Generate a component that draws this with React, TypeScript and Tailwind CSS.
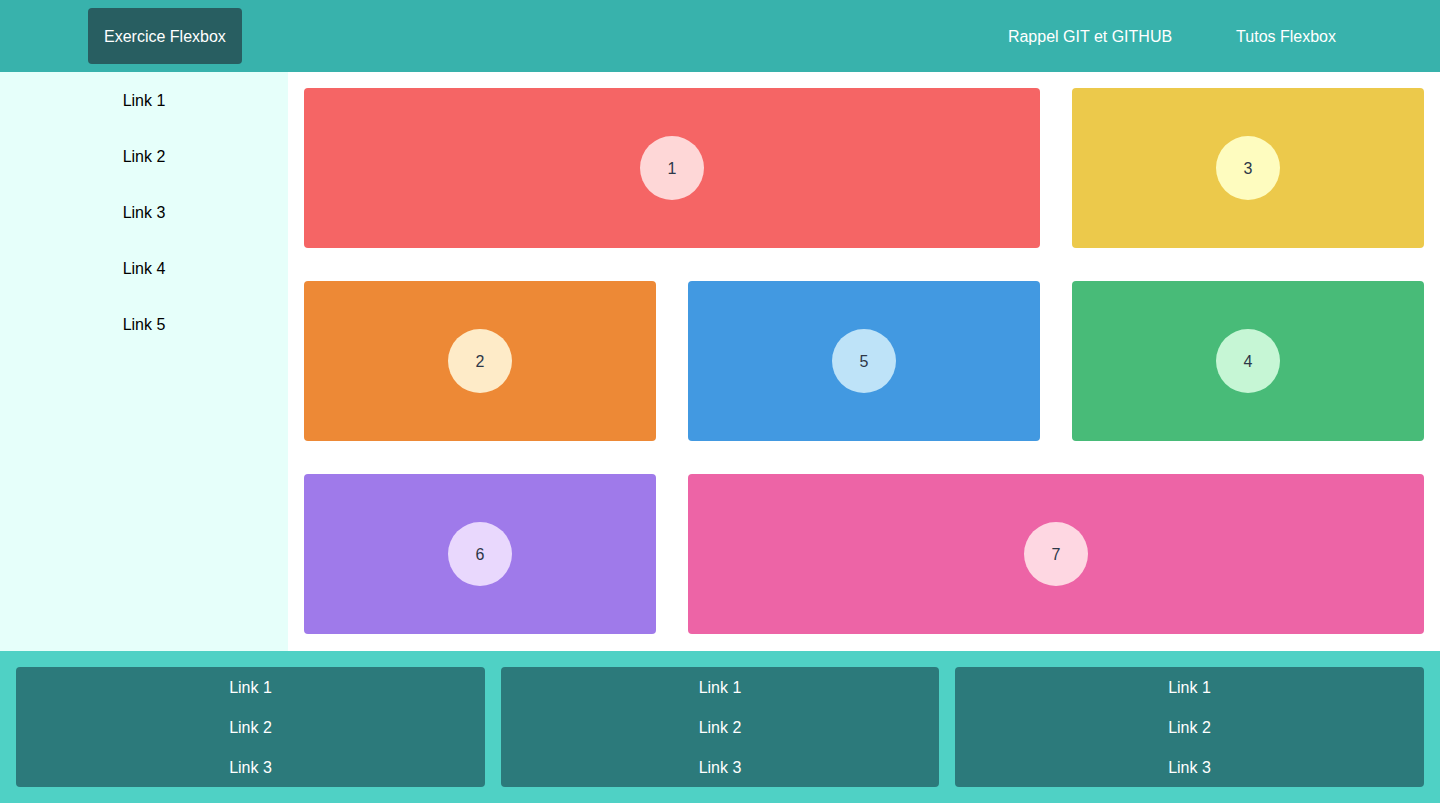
import React from 'react';

interface Box {
  id: number;
  bg: string;
  dot: string;
  span: string;
}

const boxes: Box[] = [
  { id: 1, bg: 'bg-[#f56565]', dot: 'bg-[#fed7d7]', span: 'col-span-2' },
  { id: 3, bg: 'bg-[#ecc94b]', dot: 'bg-[#fefcbf]', span: 'col-span-1' },
  { id: 2, bg: 'bg-[#ed8936]', dot: 'bg-[#feebc8]', span: 'col-span-1' },
  { id: 5, bg: 'bg-[#4299e1]', dot: 'bg-[#bee3f8]', span: 'col-span-1' },
  { id: 4, bg: 'bg-[#48bb78]', dot: 'bg-[#c6f6d5]', span: 'col-span-1' },
  { id: 6, bg: 'bg-[#9f7aea]', dot: 'bg-[#e9d8fd]', span: 'col-span-1' },
  { id: 7, bg: 'bg-[#ed64a6]', dot: 'bg-[#fed7e2]', span: 'col-span-2' },
];

const footerCols = ['w-[469px]', 'w-[438px]', 'w-[469px]'];

export default function App() {
  return (
    <div className="min-h-screen flex flex-col font-['Liberation_Sans',Arial,sans-serif] text-base">
      <header className="h-[72px] bg-[#38b2ac] flex items-center justify-between px-[88px]">
        <a className="bg-[#285e61] text-white px-4 pt-[17px] pb-[15px] rounded leading-6">Exercice Flexbox</a>
        <nav className="flex gap-8">
          <a className="text-white px-4 pt-[17px] pb-[15px] leading-6">Rappel GIT et GITHUB</a>
          <a className="text-white px-4 pt-[17px] pb-[15px] leading-6">Tutos Flexbox</a>
        </nav>
      </header>

      <div className="flex">
        <aside className="w-[288px] bg-[#e6fffa] flex flex-col items-center">
          {[1, 2, 3, 4, 5].map((n) => (
            <a key={n} className="pt-[17px] pb-[15px] leading-6 text-black">
              Link {n}
            </a>
          ))}
        </aside>

        <main className="flex-1 px-4 pt-4 pb-[17px] grid grid-cols-3 gap-x-8 gap-y-[33px]">
          {boxes.map((box) => (
            <div
              key={box.id}
              className={`${box.span} ${box.bg} h-40 rounded flex items-center justify-center`}
            >
              <div
                className={`${box.dot} w-16 h-16 pt-px rounded-full flex items-center justify-center text-[#2d3748]`}
              >
                {box.id}
              </div>
            </div>
          ))}
        </main>
      </div>

      <footer className="bg-[#4fd1c5] p-4 flex gap-4">
        {footerCols.map((w, i) => (
          <div key={i} className={`${w} bg-[#2c7a7b] rounded flex flex-col items-center`}>
            {[1, 2, 3].map((n) => (
              <a key={n} className="pt-[9px] pb-[7px] leading-6 text-white">
                Link {n}
              </a>
            ))}
          </div>
        ))}
      </footer>
    </div>
  );
}
